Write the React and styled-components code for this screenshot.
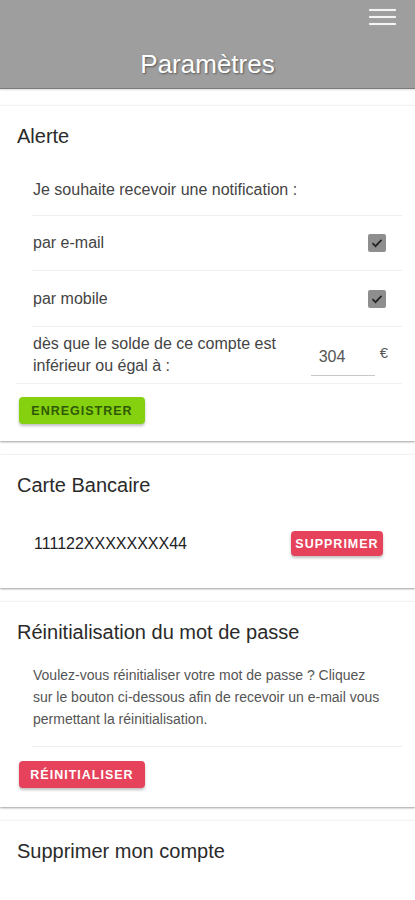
import styled, { createGlobalStyle } from 'styled-components'

const GlobalStyle = createGlobalStyle`
  body {
    margin: 0;
    background: white;
    font-family: "Liberation Sans", Arial, sans-serif;
  }
`

const Page = styled.div`
  width: 415px;
  height: 900px;
  overflow: hidden;
  background: white;
`

const Header = styled.header`
  height: 88px;
  background: #9e9e9e;
  border-bottom: 1px solid #7a7a7a;
  display: flex;
  flex-direction: column;
  box-shadow: 0 1px 2px rgba(0, 0, 0, 0.15);
`

const Toolbar = styled.div`
  display: flex;
  justify-content: flex-end;
  padding: 9px 19px 0 0;
`

const Burger = styled.button`
  width: 27px;
  padding: 0;
  border: none;
  background: none;
  display: flex;
  flex-direction: column;
  gap: 5px;

  span {
    height: 2px;
    background: #f4f4f4;
    border-radius: 1px;
    box-shadow: 0 0 1px rgba(255, 255, 255, 0.6);
  }
`

const PageTitle = styled.h1`
  margin: 24px 0 0;
  line-height: 30px;
  text-align: center;
  font-size: 26px;
  font-weight: normal;
  color: white;
  text-shadow: 1px 1px 2px rgba(0, 0, 0, 0.45);
`

const Cards = styled.main`
  display: flex;
  flex-direction: column;
  gap: 14px;
  padding-top: 17px;
`

const Card = styled.section`
  background: white;
  padding: 18px 13px ${(p) => p.$bottom || 17}px 16px;
  box-shadow: 0 1px 2px rgba(0, 0, 0, 0.38), 0 -1px 2px rgba(0, 0, 0, 0.04);
`

const CardTitle = styled.h2`
  margin: 0 0 0 1px;
  font-size: 20px;
  line-height: 24px;
  font-weight: normal;
  color: #2a2a2a;
`

const List = styled.div`
  margin-top: 16px;
  border-bottom: 1px solid #f0f0f0;
`

const Row = styled.div`
  margin-left: 16px;
  padding-left: 1px;
  min-height: ${(p) => p.$h || 54}px;
  display: flex;
  align-items: center;
  justify-content: space-between;
  border-bottom: ${(p) => (p.$last ? 'none' : '1px solid #efefef')};
  font-size: 16px;
  color: #444;
`

const Check = styled.span`
  width: 18px;
  height: 18px;
  margin-right: 16px;
  border-radius: 2px;
  background: #8e8e8e;
  display: flex;
  align-items: center;
  justify-content: center;
`

const Threshold = styled.span`
  line-height: 22px;
  width: 260px;
`

const Amount = styled.div`
  display: flex;
  align-items: center;
  margin-right: 14px;
  color: #555;
  font-size: 15px;
`

const AmountInput = styled.input`
  width: 64px;
  height: 38px;
  box-sizing: border-box;
  padding: 0 0 0 8px;
  border: none;
  border-bottom: 1px solid #c8c8c8;
  font-family: inherit;
  font-size: 16px;
  color: #555;
  margin: 12px 5px 0 0;
  outline: none;
  transform: translateY(-4px);
`

const Euro = styled.span`
  transform: translateY(-3px);
`

const Button = styled.button`
  width: ${(p) => p.$w || 126}px;
  height: ${(p) => p.$h || 27}px;
  padding: 0;
  border: none;
  border-radius: 4px;
  font-family: inherit;
  font-weight: bold;
  font-size: 12.5px;
  letter-spacing: 1px;
  background: ${(p) => (p.$green ? '#85d00f' : '#e6425b')};
  color: ${(p) => (p.$green ? '#2f5a05' : '#fff')};
  box-shadow: 0 2px 3px rgba(0, 0, 0, 0.25);
  margin: ${(p) => p.$margin || '0'};
`

const CardRow = styled.div`
  display: flex;
  align-items: center;
  justify-content: space-between;
  margin-top: 34px;
  padding: 0 19px 0 18px;
  font-size: 16px;
  color: #222;
`

const Text = styled.p`
  margin: 20px 0 0 16px;
  padding: 0 14px 16px 1px;
  font-size: 14px;
  line-height: 22px;
  color: #555;
  border-bottom: 1px solid #efefef;
`

const CheckIcon = () => (
  <svg width="12" height="10" viewBox="0 0 12 10">
    <path d="M1.5 5.2 L4.5 8.2 L10.5 1.8" fill="none" stroke="#222" strokeWidth="1.7" />
  </svg>
)

export default function App() {
  return (
    <Page>
      <GlobalStyle />
      <Header>
        <Toolbar>
          <Burger aria-label="menu">
            <span />
            <span />
            <span />
          </Burger>
        </Toolbar>
        <PageTitle>Paramètres</PageTitle>
      </Header>

      <Cards>
        <Card>
          <CardTitle>Alerte</CardTitle>
          <List>
            <Row $h={51}>Je souhaite recevoir une notification :</Row>
            <Row>
              par e-mail
              <Check><CheckIcon /></Check>
            </Row>
            <Row $h={55}>
              par mobile
              <Check><CheckIcon /></Check>
            </Row>
            <Row $h={56} $last>
              <Threshold>dès que le solde de ce compte est inférieur ou égal à :</Threshold>
              <Amount>
                <AmountInput defaultValue="304" />
                <Euro>€</Euro>
              </Amount>
            </Row>
          </List>
          <Button $green $margin="13px 0 0 3px">ENREGISTRER</Button>
        </Card>

        <Card $bottom={32}>
          <CardTitle>Carte Bancaire</CardTitle>
          <CardRow>
            111122XXXXXXXX44
            <Button $w={92} $h={25}>SUPPRIMER</Button>
          </CardRow>
        </Card>

        <Card $bottom={19}>
          <CardTitle>Réinitialisation du mot de passe</CardTitle>
          <Text>
            Voulez-vous réinitialiser votre mot de passe ? Cliquez sur le bouton ci-dessous afin de recevoir un e-mail vous permettant la réinitialisation.
          </Text>
          <Button $margin="14px 0 0 3px">RÉINITIALISER</Button>
        </Card>

        <Card $bottom={80}>
          <CardTitle>Supprimer mon compte</CardTitle>
        </Card>
      </Cards>
    </Page>
  )
}
